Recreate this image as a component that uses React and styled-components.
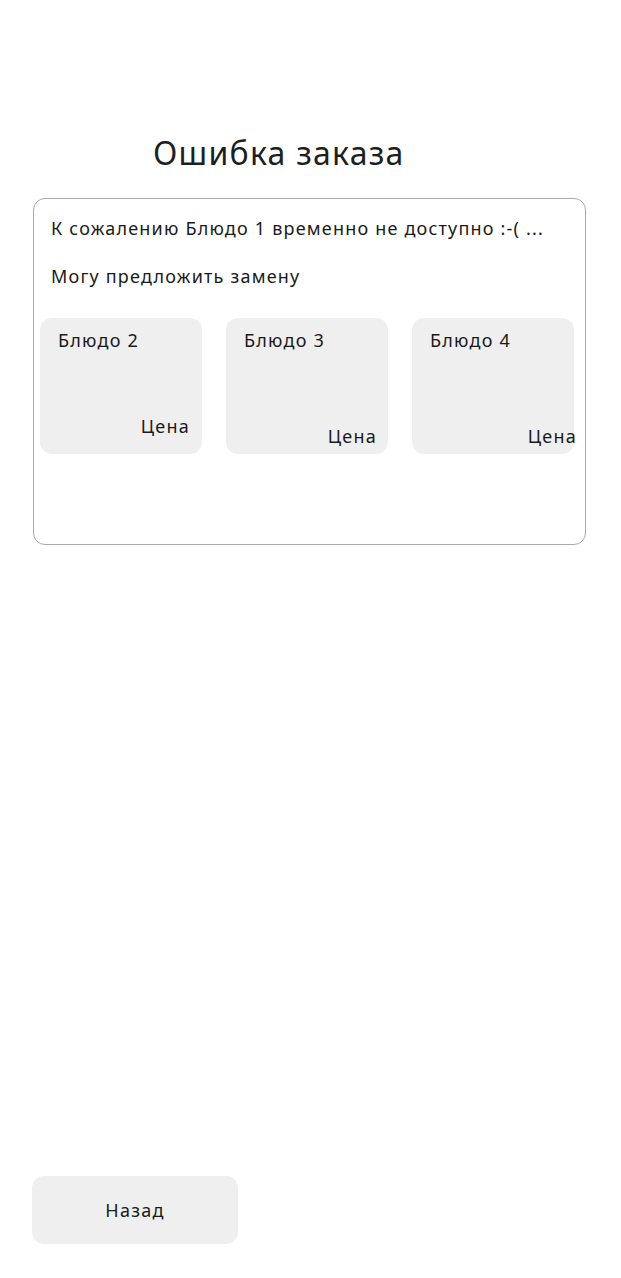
import React from "react";
import styled, { createGlobalStyle } from "styled-components";

const Global = createGlobalStyle`
  html, body { margin: 0; padding: 0; background: #fff; }
  body { font-family: "Noto Sans", "Open Sans", sans-serif; color: #1a1a1a; }
`;

const Page = styled.div`
  min-height: 100vh;
  box-sizing: border-box;
  display: flex;
  flex-direction: column;
  padding: 0 35px 34px 33px;
`;

const Title = styled.h1`
  margin: 128px 0 0 120px;
  font-size: 32px;
  font-weight: 400;
  line-height: 50px;
  letter-spacing: 1.25px;
  color: #1e1e1e;
`;

const Panel = styled.section`
  margin-top: 20px;
  height: 347px;
  box-sizing: border-box;
  border: 1.5px solid #aaaaaa;
  border-radius: 12px;
  padding: 12px 10px 0 6px;
  display: flex;
  flex-direction: column;
`;

const Line = styled.p`
  margin: 0 0 0 11px;
  font-size: 18px;
  line-height: 34px;
  letter-spacing: 1.2px;
  & + & { margin-top: 14px; }
`;

const Tiles = styled.div`
  margin-top: 25px;
  display: flex;
  gap: 24px;
`;

const Tile = styled.div`
  width: 162px;
  height: 136px;
  flex: none;
  box-sizing: border-box;
  border-radius: 12px;
  background: #efefef;
  padding: 8px 0 0 18px;
  display: flex;
  flex-direction: column;
`;

const TileName = styled.span`
  font-size: 18px;
  line-height: 28px;
  letter-spacing: 1.25px;
`;

const Price = styled.span`
  align-self: flex-end;
  margin-top: ${(p) => p.$top}px;
  margin-right: ${(p) => p.$right}px;
  font-size: 18px;
  line-height: 28px;
  letter-spacing: 1.25px;
`;

const Back = styled.button`
  margin-top: auto;
  width: 206px;
  height: 68px;
  margin-left: -1px;
  border: none;
  border-radius: 12px;
  background: #efefef;
  font-family: "Noto Sans", "Open Sans", sans-serif;
  font-size: 18px;
  letter-spacing: 1.25px;
  color: #1a1a1a;
  cursor: pointer;
`;

const dishes = [
  { name: "Блюдо 2", top: 58, right: 12 },
  { name: "Блюдо 3", top: 68, right: 11 },
  { name: "Блюдо 4", top: 68, right: -3 },
];

export default function App() {
  return (
    <>
      <Global />
      <Page>
        <Title>Ошибка заказа</Title>
        <Panel>
          <Line>К сожалению Блюдо 1 временно не доступно :-( ...</Line>
          <Line>Могу предложить замену</Line>
          <Tiles>
            {dishes.map((d) => (
              <Tile key={d.name}>
                <TileName>{d.name}</TileName>
                <Price $top={d.top} $right={d.right}>Цена</Price>
              </Tile>
            ))}
          </Tiles>
        </Panel>
        <Back>Назад</Back>
      </Page>
    </>
  );
}
